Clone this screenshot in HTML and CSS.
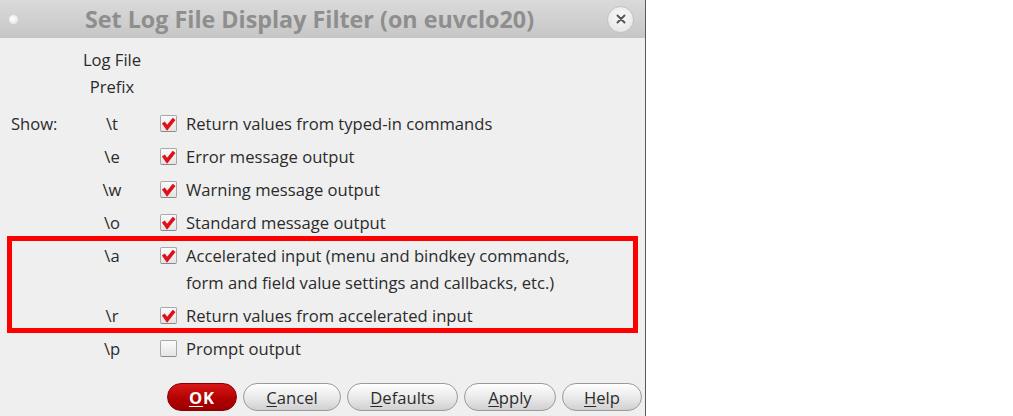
FILE: index.html
```html
<!DOCTYPE html>
<html>
<head>
<meta charset="utf-8">
<link rel="stylesheet" href="styles.css">
</head>
<body>
<div class="window">
  <div class="titlebar">
    <span class="dot"></span>
    <span class="title">Set Log File Display Filter (on euvclo20)</span>
    <span class="close"><svg width="10" height="10" viewBox="0 0 10 10"><path d="M1.5 1.5 L8.5 8.5 M8.5 1.5 L1.5 8.5" stroke="#555" stroke-width="2" stroke-linecap="round"/></svg></span>
  </div>
  <div class="content">
    <div class="grid">
      <div class="lbl"></div><div class="pfx head">Log File<br>Prefix</div><div></div>
    </div>
    <div class="rows">
      <div class="row"><div class="lbl">Show:</div><div class="pfx">\t</div><div class="opt"><span class="cb"><svg class="chk" viewBox="0 0 16 16"><path d="M2.5 7 L6.5 12.5 L14 3" fill="none" stroke="#e0101a" stroke-width="3.8" stroke-linejoin="miter"/></svg></span><span class="txt">Return values from typed-in commands</span></div></div>
      <div class="row"><div class="lbl"></div><div class="pfx">\e</div><div class="opt"><span class="cb"><svg class="chk" viewBox="0 0 16 16"><path d="M2.5 7 L6.5 12.5 L14 3" fill="none" stroke="#e0101a" stroke-width="3.8" stroke-linejoin="miter"/></svg></span><span class="txt">Error message output</span></div></div>
      <div class="row"><div class="lbl"></div><div class="pfx">\w</div><div class="opt"><span class="cb"><svg class="chk" viewBox="0 0 16 16"><path d="M2.5 7 L6.5 12.5 L14 3" fill="none" stroke="#e0101a" stroke-width="3.8" stroke-linejoin="miter"/></svg></span><span class="txt">Warning message output</span></div></div>
      <div class="row"><div class="lbl"></div><div class="pfx">\o</div><div class="opt"><span class="cb"><svg class="chk" viewBox="0 0 16 16"><path d="M2.5 7 L6.5 12.5 L14 3" fill="none" stroke="#e0101a" stroke-width="3.8" stroke-linejoin="miter"/></svg></span><span class="txt">Standard message output</span></div></div>
      <div class="row"><div class="lbl"></div><div class="pfx">\a</div><div class="opt"><span class="cb"><svg class="chk" viewBox="0 0 16 16"><path d="M2.5 7 L6.5 12.5 L14 3" fill="none" stroke="#e0101a" stroke-width="3.8" stroke-linejoin="miter"/></svg></span><span class="txt">Accelerated input (menu and bindkey commands,<br>form and field value settings and callbacks, etc.)</span></div></div>
      <div class="row"><div class="lbl"></div><div class="pfx">\r</div><div class="opt"><span class="cb"><svg class="chk" viewBox="0 0 16 16"><path d="M2.5 7 L6.5 12.5 L14 3" fill="none" stroke="#e0101a" stroke-width="3.8" stroke-linejoin="miter"/></svg></span><span class="txt">Return values from accelerated input</span></div></div>
      <div class="row"><div class="lbl"></div><div class="pfx">\p</div><div class="opt"><span class="cb"></span><span class="txt">Prompt output</span></div></div>
    </div>
    <div class="buttons">
      <button class="btn ok"><u>O</u>K</button>
      <button class="btn cancel"><u>C</u>ancel</button>
      <button class="btn defaults"><u>D</u>efaults</button>
      <button class="btn apply"><u>A</u>pply</button>
      <button class="btn help"><u>H</u>elp</button>
    </div>
    <div class="annot"></div>
  </div>
</div>
</body>
</html>
```
FILE: styles.css
```css
html, body {
  margin: 0;
  padding: 0;
  background: #ffffff;
}
body {
  font-family: "Open Sans", "DejaVu Sans", sans-serif;
  color: #2b2b2b;
  font-size: 16.6px;
}
.window {
  width: 645px;
  height: 416px;
  border-right: 1px solid #5a5a5a;
  background: #efefef;
  position: relative;
  overflow: hidden;
}
.titlebar {
  height: 38px;
  background: linear-gradient(#dadada, #c6c6c6);
  display: flex;
  align-items: center;
  position: relative;
}
.dot {
  width: 9px;
  height: 9px;
  border-radius: 50%;
  background: radial-gradient(circle at 40% 40%, #ffffff, #e0e0e0);
  margin-left: 9px;
}
.title {
  flex: 1;
  text-align: center;
  font-weight: bold;
  font-size: 23.3px;
  color: #8e8e8e;
  margin-left: -6px;
  white-space: nowrap;
}
.close {
  width: 25px;
  height: 25px;
  border-radius: 50%;
  background: radial-gradient(circle at 50% 40%, #fafafa, #e2e2e2);
  border: 1px solid #c2c2c2;
  display: flex;
  align-items: center;
  justify-content: center;
  margin-right: 11px;
}
.content {
  padding: 8px 0 0 11px;
  position: relative;
}
.grid, .row {
  display: grid;
  grid-template-columns: 72px 58px 1fr;
  line-height: 27px;
}
.pfx {
  text-align: center;
  white-space: nowrap;
}
.head {
  margin-left: -10px;
  margin-right: -10px;
}
.rows {
  margin-top: 7px;
}
.row {
  padding: 3px 0;
}
.opt {
  display: flex;
  align-items: flex-start;
  padding-left: 19px;
}
.cb {
  width: 15px;
  height: 15px;
  border: 1px solid #a8a8a8;
  border-bottom-color: #8a8a8a;
  border-radius: 2px;
  background: linear-gradient(#fbfbfb, #e4e4e4);
  margin-top: 5px;
  margin-right: 9px;
  flex: none;
  position: relative;
}
.chk {
  position: absolute;
  left: 0;
  top: 0;
  width: 15px;
  height: 15px;
}
.buttons {
  display: flex;
  gap: 6px;
  margin-top: 18px;
  padding-left: 156px;
}
.btn {
  height: 28px;
  border-radius: 14px;
  border: 1px solid #9a9a9a;
  background: linear-gradient(#ffffff, #e8e8e8 55%, #d0d0d0);
  font-family: "Open Sans", "DejaVu Sans", sans-serif;
  font-size: 16.6px;
  color: #2b2b2b;
  padding: 0;
}
.btn u {
  text-underline-offset: 2px;
}
.ok {
  width: 70px;
  background: linear-gradient(#d81818, #b00000 60%, #9a0000);
  border-color: #8a0000;
  color: #ffffff;
  font-weight: bold;
  letter-spacing: 1px;
}
.cancel { width: 98px; }
.defaults { width: 111px; }
.apply { width: 92px; }
.help { width: 80px; }
.annot {
  position: absolute;
  left: 7px;
  top: 198px;
  width: 631px;
  height: 97px;
  border: 5px solid #ff0000;
  box-sizing: border-box;
}
```
